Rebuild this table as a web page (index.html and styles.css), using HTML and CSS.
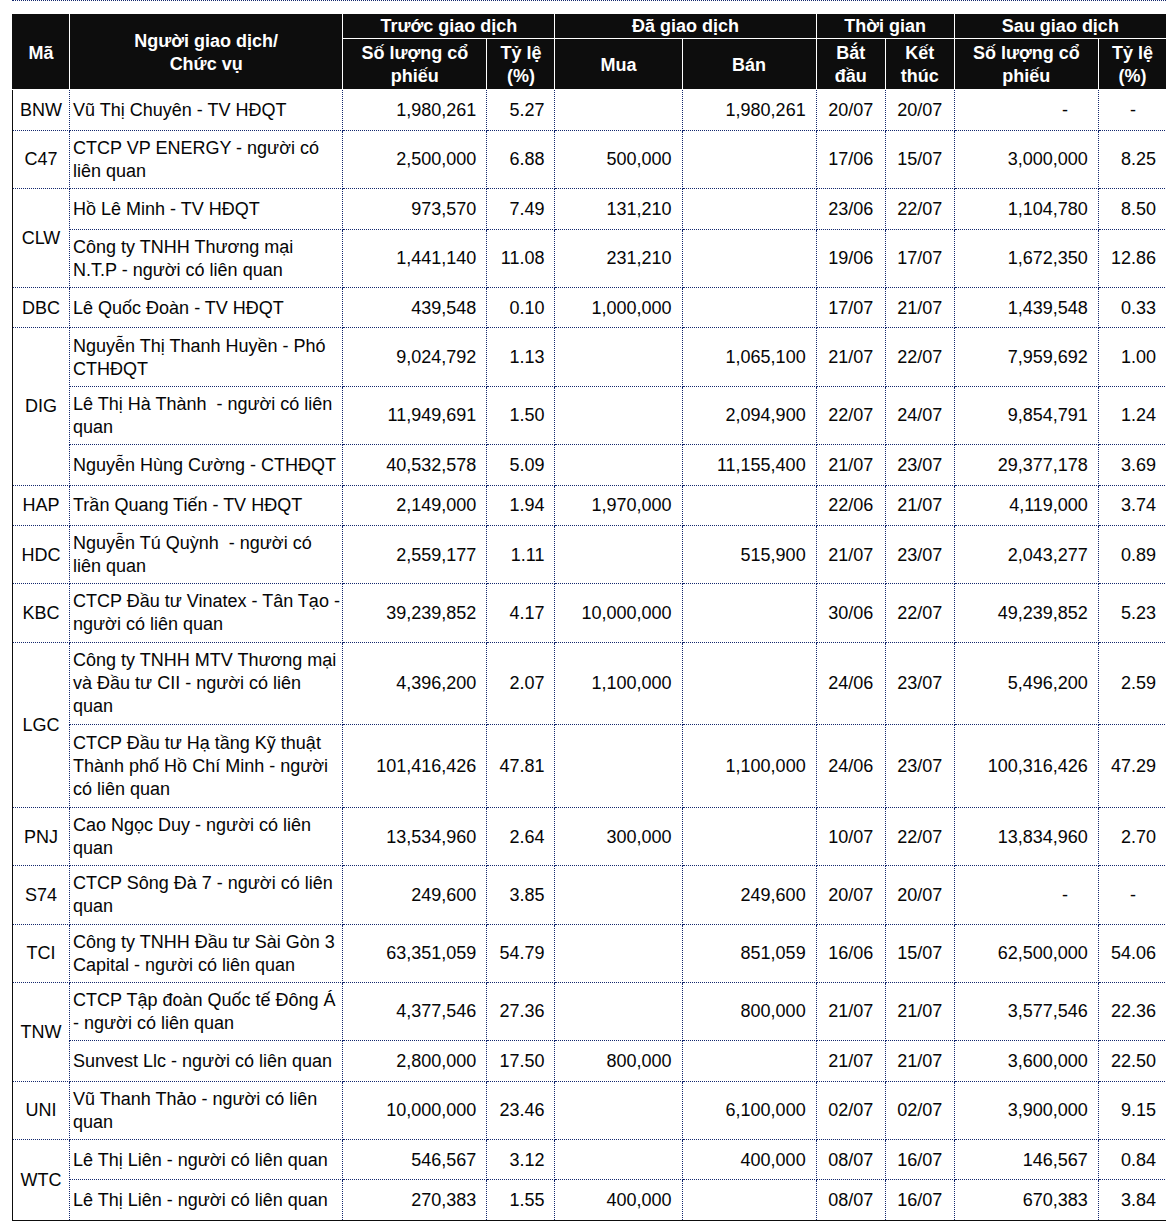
FILE: index.html
```html
<!DOCTYPE html>
<html lang="vi">
<head>
<meta charset="utf-8">
<title>Giao dịch cổ đông nội bộ</title>
<link rel="stylesheet" href="styles.css">
</head>
<body>
<div class="page">
  <table class="grid">
    <colgroup>
      <col class="c-ma"><col class="c-name"><col class="c-qty"><col class="c-pct"><col class="c-buy"><col class="c-sell"><col class="c-date"><col class="c-date"><col class="c-qty"><col class="c-pct">
    </colgroup>
    <thead>
      <tr class="h1">
        <th rowspan="2" class="first">Mã</th>
        <th rowspan="2">Người giao dịch/<br>Chức vụ</th>
        <th colspan="2">Trước giao dịch</th>
        <th colspan="2">Đã giao dịch</th>
        <th colspan="2">Thời gian</th>
        <th colspan="2" class="last">Sau giao dịch</th>
      </tr>
      <tr class="h2">
        <th>Số lượng cổ<br>phiếu</th>
        <th>Tỷ lệ<br>(%)</th>
        <th>Mua</th>
        <th>Bán</th>
        <th>Bắt<br>đầu</th>
        <th>Kết<br>thúc</th>
        <th>Số lượng cổ<br>phiếu</th>
        <th class="last">Tỷ lệ<br>(%)</th>
      </tr>
    </thead>
    <tbody>
      <tr class="r1"><td class="ma">BNW</td><td class="name">Vũ Thị Chuyên - TV HĐQT</td><td class="num">1,980,261</td><td class="num">5.27</td><td class="num"></td><td class="num">1,980,261</td><td class="dt">20/07</td><td class="dt">20/07</td><td class="num dash">-</td><td class="num dash">-</td></tr>
      <tr class="r2"><td class="ma">C47</td><td class="name">CTCP VP ENERGY - người có liên quan</td><td class="num">2,500,000</td><td class="num">6.88</td><td class="num">500,000</td><td class="num"></td><td class="dt">17/06</td><td class="dt">15/07</td><td class="num">3,000,000</td><td class="num">8.25</td></tr>
      <tr class="r1"><td class="ma" rowspan="2">CLW</td><td class="name">Hồ Lê Minh - TV HĐQT</td><td class="num">973,570</td><td class="num">7.49</td><td class="num">131,210</td><td class="num"></td><td class="dt">23/06</td><td class="dt">22/07</td><td class="num">1,104,780</td><td class="num">8.50</td></tr>
      <tr class="r2"><td class="name">Công ty TNHH Thương mại N.T.P - người có liên quan</td><td class="num">1,441,140</td><td class="num">11.08</td><td class="num">231,210</td><td class="num"></td><td class="dt">19/06</td><td class="dt">17/07</td><td class="num">1,672,350</td><td class="num">12.86</td></tr>
      <tr class="r1"><td class="ma">DBC</td><td class="name">Lê Quốc Đoàn - TV HĐQT</td><td class="num">439,548</td><td class="num">0.10</td><td class="num">1,000,000</td><td class="num"></td><td class="dt">17/07</td><td class="dt">21/07</td><td class="num">1,439,548</td><td class="num">0.33</td></tr>
      <tr class="r2"><td class="ma" rowspan="3">DIG</td><td class="name">Nguyễn Thị Thanh Huyền - Phó CTHĐQT</td><td class="num">9,024,792</td><td class="num">1.13</td><td class="num"></td><td class="num">1,065,100</td><td class="dt">21/07</td><td class="dt">22/07</td><td class="num">7,959,692</td><td class="num">1.00</td></tr>
      <tr class="r2"><td class="name">Lê Thị Hà Thành&nbsp; - người có liên quan</td><td class="num">11,949,691</td><td class="num">1.50</td><td class="num"></td><td class="num">2,094,900</td><td class="dt">22/07</td><td class="dt">24/07</td><td class="num">9,854,791</td><td class="num">1.24</td></tr>
      <tr class="r1"><td class="name">Nguyễn Hùng Cường - CTHĐQT</td><td class="num">40,532,578</td><td class="num">5.09</td><td class="num"></td><td class="num">11,155,400</td><td class="dt">21/07</td><td class="dt">23/07</td><td class="num">29,377,178</td><td class="num">3.69</td></tr>
      <tr class="r1"><td class="ma">HAP</td><td class="name">Trần Quang Tiến - TV HĐQT</td><td class="num">2,149,000</td><td class="num">1.94</td><td class="num">1,970,000</td><td class="num"></td><td class="dt">22/06</td><td class="dt">21/07</td><td class="num">4,119,000</td><td class="num">3.74</td></tr>
      <tr class="r2"><td class="ma">HDC</td><td class="name">Nguyễn Tú Quỳnh&nbsp; - người có liên quan</td><td class="num">2,559,177</td><td class="num">1.11</td><td class="num"></td><td class="num">515,900</td><td class="dt">21/07</td><td class="dt">23/07</td><td class="num">2,043,277</td><td class="num">0.89</td></tr>
      <tr class="r2"><td class="ma">KBC</td><td class="name">CTCP Đầu tư Vinatex - Tân Tạo - người có liên quan</td><td class="num">39,239,852</td><td class="num">4.17</td><td class="num">10,000,000</td><td class="num"></td><td class="dt">30/06</td><td class="dt">22/07</td><td class="num">49,239,852</td><td class="num">5.23</td></tr>
      <tr class="r3"><td class="ma" rowspan="2">LGC</td><td class="name">Công ty TNHH MTV Thương mại và Đầu tư CII - người có liên quan</td><td class="num">4,396,200</td><td class="num">2.07</td><td class="num">1,100,000</td><td class="num"></td><td class="dt">24/06</td><td class="dt">23/07</td><td class="num">5,496,200</td><td class="num">2.59</td></tr>
      <tr class="r3"><td class="name">CTCP Đầu tư Hạ tầng Kỹ thuật Thành phố Hồ Chí Minh - người có liên quan</td><td class="num">101,416,426</td><td class="num">47.81</td><td class="num"></td><td class="num">1,100,000</td><td class="dt">24/06</td><td class="dt">23/07</td><td class="num">100,316,426</td><td class="num">47.29</td></tr>
      <tr class="r2"><td class="ma">PNJ</td><td class="name">Cao Ngọc Duy - người có liên quan</td><td class="num">13,534,960</td><td class="num">2.64</td><td class="num">300,000</td><td class="num"></td><td class="dt">10/07</td><td class="dt">22/07</td><td class="num">13,834,960</td><td class="num">2.70</td></tr>
      <tr class="r2"><td class="ma">S74</td><td class="name">CTCP Sông Đà 7 - người có liên quan</td><td class="num">249,600</td><td class="num">3.85</td><td class="num"></td><td class="num">249,600</td><td class="dt">20/07</td><td class="dt">20/07</td><td class="num dash">-</td><td class="num dash">-</td></tr>
      <tr class="r2"><td class="ma">TCI</td><td class="name">Công ty TNHH Đầu tư Sài Gòn 3 Capital - người có liên quan</td><td class="num">63,351,059</td><td class="num">54.79</td><td class="num"></td><td class="num">851,059</td><td class="dt">16/06</td><td class="dt">15/07</td><td class="num">62,500,000</td><td class="num">54.06</td></tr>
      <tr class="r2"><td class="ma" rowspan="2">TNW</td><td class="name">CTCP Tập đoàn Quốc tế Đông Á - người có liên quan</td><td class="num">4,377,546</td><td class="num">27.36</td><td class="num"></td><td class="num">800,000</td><td class="dt">21/07</td><td class="dt">21/07</td><td class="num">3,577,546</td><td class="num">22.36</td></tr>
      <tr class="r1"><td class="name">Sunvest Llc - người có liên quan</td><td class="num">2,800,000</td><td class="num">17.50</td><td class="num">800,000</td><td class="num"></td><td class="dt">21/07</td><td class="dt">21/07</td><td class="num">3,600,000</td><td class="num">22.50</td></tr>
      <tr class="r2"><td class="ma">UNI</td><td class="name">Vũ Thanh Thảo - người có liên quan</td><td class="num">10,000,000</td><td class="num">23.46</td><td class="num"></td><td class="num">6,100,000</td><td class="dt">02/07</td><td class="dt">02/07</td><td class="num">3,900,000</td><td class="num">9.15</td></tr>
      <tr class="r1"><td class="ma" rowspan="2">WTC</td><td class="name">Lê Thị Liên - người có liên quan</td><td class="num">546,567</td><td class="num">3.12</td><td class="num"></td><td class="num">400,000</td><td class="dt">08/07</td><td class="dt">16/07</td><td class="num">146,567</td><td class="num">0.84</td></tr>
      <tr class="r1"><td class="name">Lê Thị Liên - người có liên quan</td><td class="num">270,383</td><td class="num">1.55</td><td class="num">400,000</td><td class="num"></td><td class="dt">08/07</td><td class="dt">16/07</td><td class="num">670,383</td><td class="num">3.84</td></tr>
    </tbody>
  </table>
</div>
</body>
</html>
```
FILE: styles.css
```css
html, body {
  margin: 0;
  padding: 0;
  background: #ffffff;
  overflow: hidden;
}

.page {
  margin-left: 12px;
  border-top: 1px dotted #14286e;
  padding-top: 13px;
  font-family: "Liberation Sans", Arial, sans-serif;
  font-size: 18px;
  line-height: 23px;
  color: #050505;
}

.grid {
  border-collapse: collapse;
  table-layout: fixed;
  width: 1155px;
}

.c-ma { width: 57px; }
.c-name { width: 273px; }
.c-qty { width: 144px; }
.c-pct { width: 68px; }
.c-buy { width: 127px; }
.c-sell { width: 134px; }
.c-date { width: 69px; }

.grid th {
  background: #0d0d0d;
  color: #ffffff;
  font-weight: bold;
  text-align: center;
  vertical-align: middle;
  border: 1px solid #ffffff;
  padding: 0;
}

.grid thead .h1 th { border-top: 1px solid #0d0d0d; height: 23px; }
.grid thead .h2 th { height: 48px; padding-top: 2px; }
.grid thead .h1 th[rowspan] { padding-top: 2px; }
.grid th.first { border-left: 1px solid #0d0d0d; }
.grid th.last { border-right: 1px solid #0d0d0d; }

.grid td {
  border: 1px dotted #14286e;
  vertical-align: middle;
  padding: 1px 4px 0;
}

.grid tr.r1 td { height: 38.7px; }
.grid tr.r2 td { height: 56.2px; }
.grid tr.r3 td { height: 80.8px; }

.grid td.ma {
  text-align: center;
  border-left: 1px solid #0d0d0d;
  padding: 1px 0 0;
}

.grid td.name {
  text-align: left;
  padding: 1px 0 0 3px;
}

.grid td.num {
  text-align: right;
  padding-right: 10px;
}

.grid td.num.dash {
  padding-right: 30px;
}

.grid td.dt {
  text-align: center;
  padding: 1px 0 0;
}

.grid tbody tr:last-child td { border-bottom: 1px solid #0d0d0d; }
.grid tbody tr:nth-last-child(2) td.ma { border-bottom: 1px solid #0d0d0d; }
```
